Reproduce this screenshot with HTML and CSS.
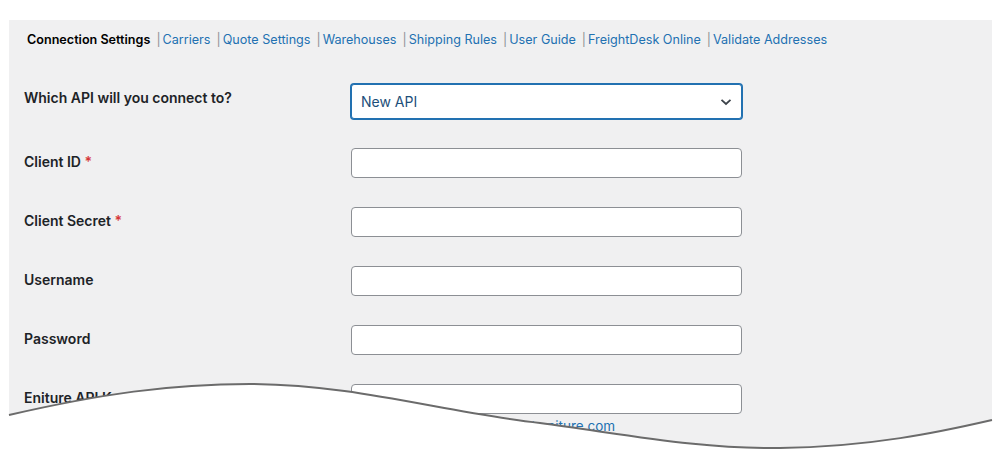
FILE: index.html
```html
<!DOCTYPE html>
<html lang="en">
<head>
    <meta charset="UTF-8">
    <title>Connection Settings</title>
    <link rel="stylesheet" href="styles.css">
</head>
<body>
    <div class="page">
        <div class="panel">
            <ul class="subnav">
                <li class="current">Connection Settings</li>
                <li><span class="sep">|</span><a href="#">Carriers</a></li>
                <li><span class="sep">|</span><a href="#">Quote Settings</a></li>
                <li><span class="sep">|</span><a href="#">Warehouses</a></li>
                <li><span class="sep">|</span><a href="#">Shipping Rules</a></li>
                <li><span class="sep">|</span><a href="#">User Guide</a></li>
                <li><span class="sep">|</span><a href="#">FreightDesk Online</a></li>
                <li><span class="sep">|</span><a href="#">Validate Addresses</a></li>
            </ul>

            <div class="form">
                <div class="row">
                    <label class="label">Which API will you connect to?</label>
                    <div class="field">
                        <div class="select">
                            <span>New API</span>
                            <svg class="chevron" width="12" height="8" viewBox="0 0 12 8">
                                <path d="M1.5 1.8 L6 6 L10.5 1.8" fill="none" stroke="#3c434a" stroke-width="1.8"/>
                            </svg>
                        </div>
                    </div>
                </div>
                <div class="row">
                    <label class="label">Client ID <span class="req">*</span></label>
                    <div class="field"><input class="input" type="text"></div>
                </div>
                <div class="row">
                    <label class="label">Client Secret <span class="req">*</span></label>
                    <div class="field"><input class="input" type="text"></div>
                </div>
                <div class="row">
                    <label class="label">Username</label>
                    <div class="field"><input class="input" type="text"></div>
                </div>
                <div class="row">
                    <label class="label">Password</label>
                    <div class="field"><input class="input" type="password"></div>
                </div>
                <div class="row">
                    <label class="label">Eniture API Key</label>
                    <div class="field">
                        <input class="input" type="text">
                        <p class="desc">Get your Eniture API Key at eniture.com</p>
                    </div>
                </div>
            </div>
        </div>

        <!-- torn edge over the bottom of the panel -->
        <svg class="tear" width="1000" height="471" viewBox="0 0 1000 471">
            <path d="M9 415 C 100 394 170 384 250 384 C 360 385 440 412 540 423 C 630 435 700 449 780 448 C 870 447 940 432 992 420 L 1000 420 L 1000 471 L 0 471 L 0 415 Z" fill="#fff"/>
            <path d="M9 415 C 100 394 170 384 250 384 C 360 385 440 412 540 423 C 630 435 700 449 780 448 C 870 447 940 432 992 420" fill="none" stroke="#6b6b6b" stroke-width="2"/>
        </svg>
    </div>
</body>
</html>
```

FILE: styles.css
```css
/* Base */
body {
    margin: 0;
    background-color: #ffffff;
    font-family: Inter, "Noto Sans", sans-serif;
    color: #1d2327;
}

.page {
    position: relative;
    width: 1000px;
    height: 471px;
    overflow: hidden;
}

.panel {
    margin: 20px 8px 0 9px;
    height: 451px;
    background-color: #f0f0f1;
    padding: 11px 0 0 15px;
    box-sizing: border-box;
}

/* Sub navigation */
.subnav {
    list-style: none;
    margin: 0 0 36px 3px;
    padding: 0;
    display: flex;
    font-size: 12.6px;
    line-height: 17px;
}

.subnav li {
    white-space: nowrap;
}

.subnav .current {
    font-weight: 600;
    color: #000000;
    margin-right: 6px;
}

.subnav .sep {
    color: #8c8f94;
    margin-right: 2px;
}

.subnav a {
    color: #2271b1;
    text-decoration: none;
    margin-right: 6px;
}

/* Form rows */
.form {
    display: flex;
    flex-direction: column;
    gap: 29px;
}

.row {
    display: flex;
    align-items: flex-start;
}

.label {
    width: 327px;
    padding-top: 5px;
    font-size: 14px;
    line-height: 17px;
    font-weight: 600;
}

.req {
    color: #d63638;
}

.field {
    width: 391px;
}

.select {
    height: 35px;
    box-sizing: border-box;
    border: 1px solid #2271b1;
    box-shadow: 0 0 0 1px #2271b1;
    border-radius: 3px;
    background-color: #ffffff;
    display: flex;
    align-items: center;
    justify-content: space-between;
    padding: 0 9px 0 9px;
    font-size: 14px;
}

.select span {
    color: #1d4f7a;
}

.input {
    display: block;
    width: 391px;
    height: 30px;
    box-sizing: border-box;
    border: 1px solid #8c8f94;
    border-radius: 4px;
    background-color: #ffffff;
    margin: 0;
}

.desc {
    margin: 4px 0 0 0;
    padding-left: 13px;
    font-size: 13.5px;
    line-height: 17px;
    color: #2271b1;
}

/* Torn edge overlay */
.tear {
    position: absolute;
    left: 0;
    top: 0;
}
```
